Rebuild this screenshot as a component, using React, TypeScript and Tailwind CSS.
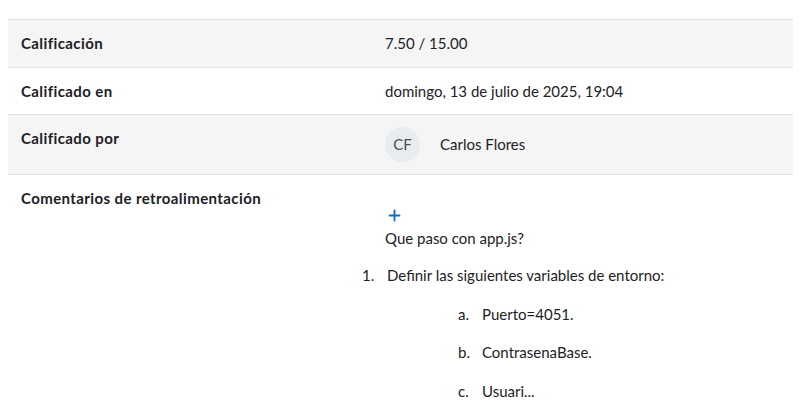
import { Plus } from 'lucide-react';

const font = { fontFamily: 'Lato, "Open Sans", sans-serif' };

function Row({ label, gray, children }: { label: string; gray?: boolean; children: React.ReactNode }) {
  return (
    <tr className={gray ? 'bg-[#f5f5f5] border-b border-[#dee2e6]' : 'bg-white border-b border-[#dee2e6]'}>
      <th className="w-[365px] px-[13px] py-3 text-left align-top font-bold tracking-[0.4px]">{label}</th>
      <td className="px-3 py-3 align-top">{children}</td>
    </tr>
  );
}

export default function App() {
  return (
    <div className="min-h-screen bg-white pt-[19px] px-2 text-[15px] leading-[22.5px] text-[#1d2125]" style={font}>
      <table className="w-[785px] border-collapse border-t border-[#dee2e6]">
        <tbody>
          <Row label="Calificación" gray>7.50 / 15.00</Row>
          <Row label="Calificado en">domingo, 13 de julio de 2025, 19:04</Row>
          <tr className="bg-[#f5f5f5] border-b border-[#dee2e6]">
            <th className="w-[365px] px-[13px] pt-3 pb-3 text-left align-top font-bold tracking-[0.4px]">Calificado por</th>
            <td className="px-3 py-3 align-top">
              <div className="flex items-center">
                <div className="w-[35px] h-[35px] rounded-full bg-[#e9ecef] flex items-center justify-center text-[15px] text-[#495057]">CF</div>
                <span className="ml-5">Carlos Flores</span>
              </div>
            </td>
          </tr>
          <tr className="bg-white">
            <th className="w-[365px] px-[13px] py-3 text-left align-top font-bold tracking-[0.4px]">Comentarios de retroalimentación</th>
            <td className="px-3 py-3 align-top">
              <div className="mt-[17px] h-[22.5px] flex items-center">
                <Plus size={17} strokeWidth={2.6} className="text-[#0f6cbf] ml-[1px]" />
              </div>
              <p className="mb-[15px]">Que paso con app.js?</p>
              <div className="flex">
                <span className="-ml-[23px] w-[25px]">1.</span>
                <div>
                  <p className="mb-[16px]">Definir las siguientes variables de entorno:</p>
                  <div className="ml-[71px] flex flex-col gap-[16px]">
                    <div className="flex"><span className="w-[24px]">a.</span><span>Puerto=4051.</span></div>
                    <div className="flex"><span className="w-[24px]">b.</span><span>ContrasenaBase.</span></div>
                    <div className="flex"><span className="w-[24px]">c.</span><span>Usuari...</span></div>
                  </div>
                </div>
              </div>
            </td>
          </tr>
        </tbody>
      </table>
    </div>
  );
}
